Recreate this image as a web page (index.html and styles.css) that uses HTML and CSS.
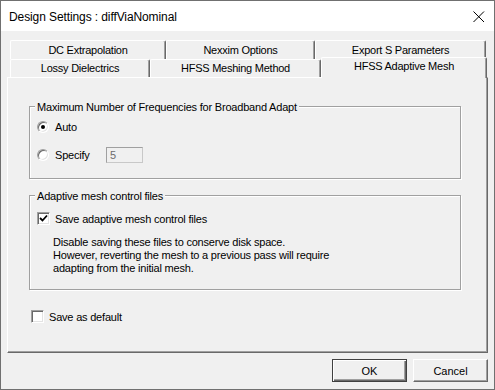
FILE: index.html
```html
<!DOCTYPE html>
<html lang="en">
<head>
    <meta charset="UTF-8">
    <meta name="viewport" content="width=device-width, initial-scale=1.0">
    <title>Design Settings</title>
    <link rel="stylesheet" href="styles.css">
</head>
<body>
    <div class="window">
        <div class="titlebar">
            <span class="title">Design Settings : diffViaNominal</span>
            <svg class="close" width="12" height="12" viewBox="0 0 12 12">
                <path d="M0.5 0.5 L11 11 M11 0.5 L0.5 11" stroke="#000" stroke-width="1" fill="none"/>
            </svg>
        </div>

        <div class="dialog-body">
            <div class="tabs">
                <div class="tab-row back">
                    <div class="tab" style="width:156px">DC Extrapolation</div>
                    <div class="tab" style="width:149px">Nexxim Options</div>
                    <div class="tab" style="width:171px">Export S Parameters</div>
                </div>
                <div class="tab-row front">
                    <div class="tab" style="width:140px">Lossy Dielectrics</div>
                    <div class="tab" style="width:171px">HFSS Meshing Method</div>
                    <div class="tab selected" style="width:166px">HFSS Adaptive Mesh</div>
                </div>
            </div>

            <div class="panel">
                <div class="group group-freq">
                    <div class="group-title">Maximum Number of Frequencies for Broadband Adapt</div>
                    <label class="option first">
                        <span class="radio checked"></span>
                        <span>Auto</span>
                    </label>
                    <label class="option second">
                        <span class="radio"></span>
                        <span class="option-label">Specify</span>
                        <span class="field">5</span>
                    </label>
                </div>

                <div class="group group-mesh">
                    <div class="group-title">Adaptive mesh control files</div>
                    <label class="option check-row">
                        <span class="check">
                            <svg width="9" height="9" viewBox="0 0 9 9">
                                <path d="M1 4 L3.5 6.5 L8 1.5" stroke="#000" stroke-width="1.8" fill="none"/>
                            </svg>
                        </span>
                        <span>Save adaptive mesh control files</span>
                    </label>
                    <p class="note">
                        Disable saving these files to conserve disk space.<br>
                        However, reverting the mesh to a previous pass will require<br>
                        adapting from the initial mesh.
                    </p>
                </div>

                <label class="option save-default">
                    <span class="check"></span>
                    <span>Save as default</span>
                </label>
            </div>

            <div class="buttons">
                <button class="btn default">OK</button>
                <button class="btn">Cancel</button>
            </div>
        </div>
    </div>
</body>
</html>
```

FILE: styles.css
```css
body {
    margin: 0;
    padding: 0;
    font-family: 'Liberation Sans', Arial, sans-serif;
    font-size: 11px;
    letter-spacing: -0.2px;
    color: #000;
    background-color: #fff;
}

.window {
    width: 495px;
    height: 390px;
    box-sizing: border-box;
    border: 1px solid #707070;
    background-color: #f0f0f0;
    display: flex;
    flex-direction: column;
}

/* title bar */
.titlebar {
    height: 30px;
    background-color: #fff;
    display: flex;
    align-items: center;
    justify-content: space-between;
    padding-left: 8px;
}

.title {
    font-size: 12px;
    letter-spacing: -0.1px;
    padding-top: 1px;
}

.close {
    margin-right: 9px;
    margin-top: 1px;
}

.dialog-body {
    flex: 1;
    padding: 9px 0 0 6px;
}

/* tabs */
.tabs {
    margin-left: 3px;
}

.tab-row {
    display: flex;
    align-items: flex-end;
}

.tab-row.back {
    height: 19px;
}

.tab-row.front {
    height: 18px;
}

.tab {
    box-sizing: border-box;
    background-color: #f0f0f0;
    border-top: 1px solid #fff;
    border-left: 1px solid #fff;
    border-right: 1px solid #696969;
    box-shadow: inset -1px 0 #a0a0a0;
    border-radius: 2px 2px 0 0;
    text-align: center;
    white-space: nowrap;
    letter-spacing: -0.25px;
}

.back .tab {
    height: 19px;
    line-height: 18px;
}

.front .tab {
    height: 18px;
    line-height: 17px;
}

.front .tab.selected {
    height: 21px;
    line-height: 16px;
    margin-bottom: -1px;
    position: relative;
    z-index: 2;
}

/* page panel */
.panel {
    width: 481px;
    height: 276px;
    box-sizing: border-box;
    border-top: 1px solid #fff;
    border-left: 1px solid #fff;
    border-right: 1px solid #696969;
    border-bottom: 1px solid #696969;
    box-shadow: inset -1px -1px #a0a0a0;
    padding: 28px 0 0 21px;
}

.group {
    width: 432px;
    box-sizing: border-box;
    border: 1px solid #a0a0a0;
    box-shadow: inset 1px 1px #fff, 1px 1px #fff;
    padding: 0 7px;
}

.group-freq {
    height: 73px;
}

.group-mesh {
    height: 95px;
    margin-top: 16px;
}

.group-title {
    width: fit-content;
    margin: -7px 0 0 -2px;
    padding: 0 2px;
    line-height: 14px;
    background-color: #f0f0f0;
}

.option {
    display: flex;
    align-items: center;
    height: 16px;
}

.option.first {
    margin-top: 5px;
}

.option.second {
    margin-top: 12px;
}

.option-label {
    width: 51px;
}

.radio {
    width: 12px;
    height: 12px;
    box-sizing: border-box;
    border-radius: 50%;
    border: 1px solid;
    border-color: #a0a0a0 #fff #fff #a0a0a0;
    box-shadow: inset 1px 1px #696969, inset -1px -1px #e3e3e3;
    background-color: #fff;
    margin-right: 6px;
    display: flex;
    align-items: center;
    justify-content: center;
}

.radio.checked::after {
    content: "";
    width: 4px;
    height: 4px;
    border-radius: 50%;
    background-color: #000;
}

.field {
    width: 37px;
    height: 16px;
    box-sizing: border-box;
    border: 1px solid #a0a0a0;
    border-right-color: #c8c8c8;
    border-bottom-color: #c8c8c8;
    color: #6d6d6d;
    line-height: 14px;
    padding-left: 3px;
}

.check {
    width: 13px;
    height: 13px;
    box-sizing: border-box;
    border: 1px solid;
    border-color: #a0a0a0 #fff #fff #a0a0a0;
    box-shadow: inset 1px 1px #696969, inset -1px -1px #e3e3e3;
    background-color: #fff;
    margin-right: 5px;
    display: flex;
    align-items: center;
    justify-content: center;
}

.check-row {
    height: 13px;
    margin-top: 9px;
}

.note {
    margin: 11px 0 0 16px;
    line-height: 13px;
}

.save-default {
    height: 13px;
    margin: 20px 0 0 2px;
}

/* buttons */
.buttons {
    display: flex;
    justify-content: flex-end;
    gap: 6px;
    padding: 6px 6px 0 0;
}

.btn {
    width: 75px;
    height: 23px;
    box-sizing: border-box;
    font-family: 'Liberation Sans', Arial, sans-serif;
    font-size: 11px;
    color: #000;
    background-color: #f0f0f0;
    border: 1px solid;
    border-color: #fff #696969 #696969 #fff;
    box-shadow: inset -1px -1px #a0a0a0;
    padding: 0;
}

.btn.default {
    border: 1px solid #404040;
    box-shadow: inset 1px 1px #fff, inset -1px -1px #696969, inset -2px -2px #a0a0a0;
}
```
